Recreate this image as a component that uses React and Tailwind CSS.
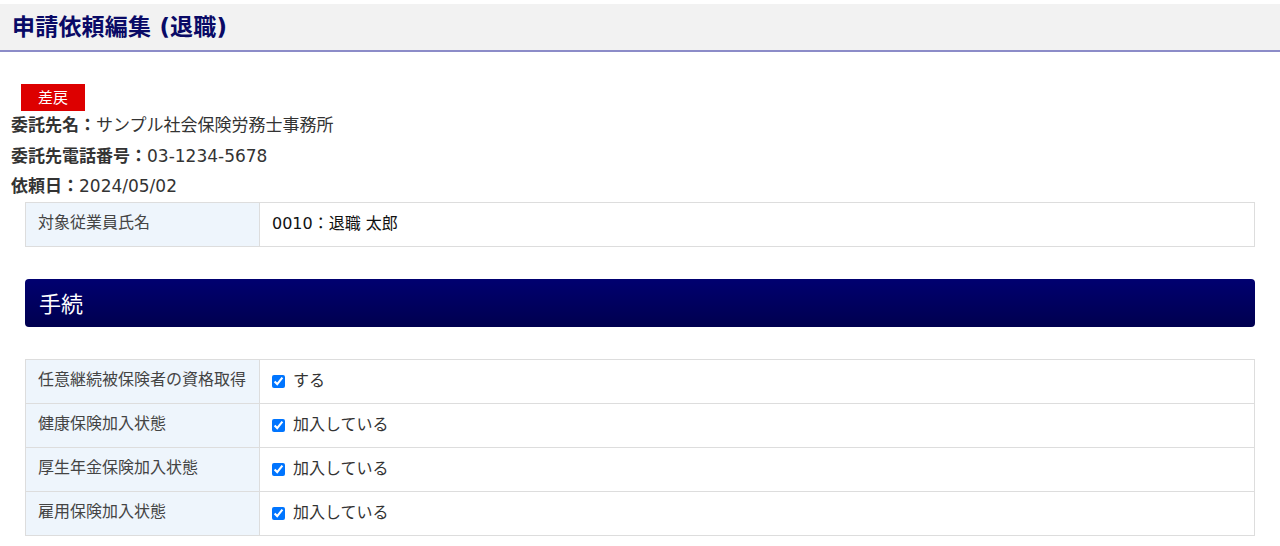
import React from "react";

const font = { fontFamily: '"DejaVu Sans", "Noto Sans CJK JP", sans-serif' };
const cjk = { fontFamily: '"Noto Sans CJK JP", sans-serif' };

function Row({ label, children, first }) {
  return (
    <div className={`flex h-[44px] ${first ? "" : "border-t border-[#dddddd]"}`}>
      <div className="w-[234px] shrink-0 bg-[#eef5fc] border-r border-[#dddddd] pl-[12px] pt-[8px] text-[16px] leading-[24px] text-[#444444]">
        {label}
      </div>
      <div className="flex-1 flex items-center pl-[12px] text-[16px] text-[#222222]">{children}</div>
    </div>
  );
}

function Check({ text }) {
  return (
    <label className="flex items-center gap-[8px]">
      <input type="checkbox" checked readOnly className="w-[13px] h-[13px] m-0 accent-[#0075ff]" />
      <span className="text-[16px] text-[#333333]">{text}</span>
    </label>
  );
}

export default function App() {
  return (
    <div className="bg-white w-[1280px] min-h-[546px] pt-[4px]" style={font}>
      <div className="bg-[#f2f2f2] h-[48px] border-b-2 border-[#8c8cc8] flex items-center pl-[12px]">
        <h1 className="text-[23px] font-bold text-[#0a0a66] leading-none tracking-[0.2px]">申請依頼編集 (退職)</h1>
      </div>
      <div className="pl-[21px] pt-[32px]">
        <div className="w-[64px] h-[27px] bg-[#dd0000] text-white text-[15px] flex items-center justify-center" style={cjk}>差戻</div>
      </div>
      <div className="pl-[11px] text-[17px] text-[#333333] leading-[30.5px] mt-[-1px]">
        <div><span className="font-bold">委託先名：</span>サンプル社会保険労務士事務所</div>
        <div><span className="font-bold">委託先電話番号：</span>03-1234-5678</div>
        <div><span className="font-bold">依頼日：</span>2024/05/02</div>
      </div>
      <div className="px-[25px]">
        <div className="border border-[#dddddd] w-[1230px] [&>div]:h-[43px]">
          <Row label="対象従業員氏名" first>
            <span className="text-[#111111]">0010：退職 太郎</span>
          </Row>
        </div>
        <div className="mt-[32px] h-[48px] rounded-[4px] bg-gradient-to-b from-[#000070] to-[#00004f] flex items-center pl-[14px]">
          <span className="text-white text-[22px]" style={cjk}>手続</span>
        </div>
        <div className="mt-[32px] border border-[#dddddd] w-[1230px] [&>div]:h-[44px] [&>div:first-child]:h-[43px]">
          <Row label="任意継続被保険者の資格取得" first><Check text="する" /></Row>
          <Row label="健康保険加入状態"><Check text="加入している" /></Row>
          <Row label="厚生年金保険加入状態"><Check text="加入している" /></Row>
          <Row label="雇用保険加入状態"><Check text="加入している" /></Row>
        </div>
      </div>
    </div>
  );
}
